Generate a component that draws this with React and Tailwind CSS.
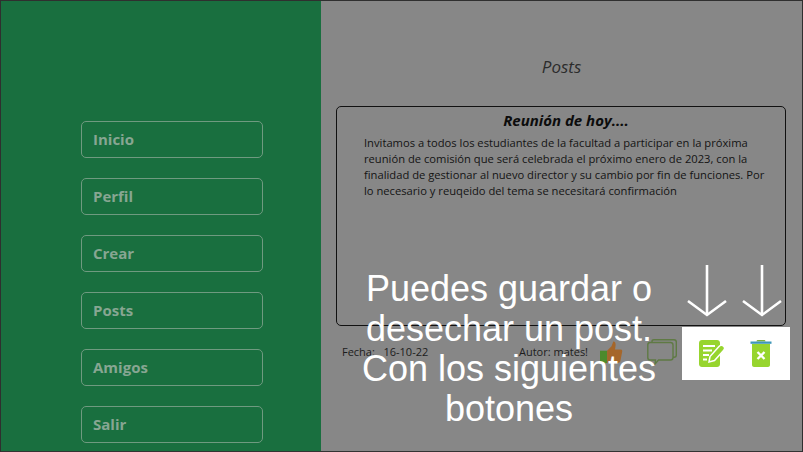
const items = ["Inicio", "Perfil", "Crear", "Posts", "Amigos", "Salir"];

function Arrow() {
  return (
    <svg width="42" height="54" viewBox="0 0 42 54" fill="none" stroke="#ffffff" strokeWidth="2.6" className="block">
      <path d="M21 0V50" />
      <path d="M2 36L21 50L40 36" />
    </svg>
  );
}

function Thumb() {
  return (
    <svg width="23" height="23" viewBox="0 0 26 26" className="block">
      <rect x="0" y="11" width="8" height="14" fill="#4c8a2c" />
      <path d="M8 11L13 6L15 0.5C17.5 0.5 18 3 17.5 6L17 9.5H23.5C25 9.5 25.5 11 25 12.5L23 23C22.7 24 22 24.500 21 24.500H8Z" fill="#a5662a" />
    </svg>
  );
}

function Comments() {
  return (
    <svg width="30" height="26" viewBox="0 0 30 26" fill="none" stroke="#5f7a44" strokeWidth="1.400" className="block">
      <path d="M5 3V2.500C5 1.400 5.800 .8 7 .8H27C28.500 .8 29.300 1.800 29.300 3V16C29.300 17.500 28.500 18.300 27 18.300H26" />
      <path d="M3 3.500H23.500C25 3.500 26 4.500 26 6V18.500C26 20 25 21 23.500 21H11.500L8 25L8.500 21H3C1.800 21 .8 20 .8 18.500V6C.8 4.500 1.800 3.500 3 3.500Z" />
    </svg>
  );
}

function SaveIcon() {
  return (
    <svg width="26" height="27" viewBox="0 0 26 27" className="block">
      <path d="M3 0H18C19.700 0 21 1.300 21 3V24C21 25.700 19.700 27 18 27H3C1.300 27 0 25.700 0 24V3C0 1.300 1.300 0 3 0Z" fill="#97d52e" />
      <path d="M4 6H16M4 10.500H13M4 15H10M4 19.500H8" stroke="#ffffff" strokeWidth="1.800" fill="none" />
      <path d="M10 22L11 16.500L20 6.500C21.300 5 23.300 5 24.600 6.200C25.800 7.400 25.800 9.300 24.500 10.600L15.500 20.500Z" fill="#97d52e" stroke="#ffffff" strokeWidth="1.500" />
    </svg>
  );
}

function TrashIcon() {
  return (
    <svg width="22" height="27" viewBox="0 0 22 27" className="block">
      <path d="M8 0H14C15 0 15.500 .5 15.500 1.500H6.500C6.500 .5 7 0 8 0Z" fill="#7fae3c" />
      <rect x="0.500" y="1.500" width="21" height="2.300" fill="#3f97b8" />
      <path d="M2 4H20V25C20 26 19 27 18 27H4C3 27 2 26 2 25Z" fill="#97d52e" />
      <path d="M7.500 12L14.500 19M14.500 12L7.500 19" stroke="#ffffff" strokeWidth="2.300" fill="none" />
    </svg>
  );
}

export default function App() {
  return (
    <div className="relative flex h-[452px] w-[803px] overflow-hidden border border-[#2f2f2f] border-b-[#333] bg-[#878787] font-['Open_Sans','Noto_Sans',sans-serif]">
      <aside className="flex w-[320px] shrink-0 flex-col gap-5 bg-[#196f3f] pl-[80px] pt-[120px]">
        {items.map((t) => (
          <div
            key={t}
            className="flex h-[37px] w-[182px] shrink-0 items-center rounded-[5px] border border-[#6f9a80] pl-[11px] text-[15px] font-bold text-[#87a692]"
          >
            {t}
          </div>
        ))}
      </aside>

      <main className="flex min-w-0 flex-1 flex-col">
        <h1 className="mt-[52px] h-[27px] text-center text-[17px] leading-[27px] italic text-[#2c2c2c]">Posts</h1>
        <section className="ml-[15px] mt-[26px] h-[220px] w-[450px] rounded-[5px] border border-[#111] pt-[3px]">
          <h2 className="pl-[10px] text-center text-[15px] leading-[20px] font-bold italic text-[#0c0c0c]">Reunión de hoy....</h2>
          <p className="mt-[5px] w-[406px] pl-[27px] box-content text-[11.200px] leading-[16px] text-[#141414]">
            Invitamos a todos los estudiantes de la facultad a participar en la próxima reunión de comisión que será celebrada el próximo enero de 2023, con la finalidad de gestionar al nuevo director y su cambio por fin de funciones. Por lo necesario y reuqeido del tema se necesitará confirmación
          </p>
        </section>
        <footer className="mt-[8px] flex h-[36px] items-center text-[11px] text-[#1c1c1c]">
          <span className="ml-[21px] w-[177px] whitespace-pre">Fecha:   16-10-22</span>
          <span className="w-[81px]">Autor: mates!</span>
          <Thumb />
          <span className="ml-[24px]"><Comments /></span>
        </footer>
      </main>

      <div className="absolute left-[681px] top-[326px] flex h-[53px] w-[108px] items-center bg-white">
        <span className="ml-[17px]"><SaveIcon /></span>
        <span className="ml-[25px]"><TrashIcon /></span>
      </div>
      <div className="absolute left-[685px] top-[264px]"><Arrow /></div>
      <div className="absolute left-[740px] top-[264px]"><Arrow /></div>

      <div className="absolute left-[338px] top-[268px] w-[340px] text-center font-['Liberation_Sans',Arial,sans-serif] text-[36px] leading-[40px] text-white">
        Puedes guardar o desechar un post.
        <br />
        Con los siguientes botones
      </div>
    </div>
  );
}
